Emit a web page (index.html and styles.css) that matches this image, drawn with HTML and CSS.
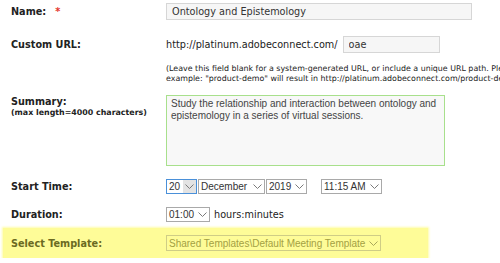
FILE: index.html
```html
<!DOCTYPE html>
<html lang="en">
<head>
    <meta charset="UTF-8">
    <title>Meeting Information</title>
    <link rel="stylesheet" href="styles.css">
</head>
<body>
    <div class="form">
        <div class="row row-name">
            <div class="label">Name:<span class="req">*</span></div>
            <input class="text name-input" type="text" value="Ontology and Epistemology">
        </div>

        <div class="row row-url">
            <div class="label">Custom URL:</div>
            <span class="url-prefix">http://platinum.adobeconnect.com/</span>
            <input class="text url-input" type="text" value="oae">
        </div>
        <div class="help">
            (Leave this field blank for a system-generated URL, or include a unique URL path. Please use only letters and numbers. For<br>
            example: "product-demo" will result in http://platinum.adobeconnect.com/product-demo/)
        </div>

        <div class="row row-summary">
            <div class="label">
                Summary:
                <div class="sub">(max length=4000 characters)</div>
            </div>
            <textarea class="summary">Study the relationship and interaction between ontology and epistemology in a series of virtual sessions.</textarea>
        </div>

        <div class="row row-start">
            <div class="label">Start Time:</div>
            <div class="select day focus"><span class="value">20</span><span class="arrow"><svg width="9" height="5" viewBox="0 0 9 5"><polyline points="0.5,0.5 4.5,4.5 8.5,0.5"/></svg></span></div>
            <div class="select month"><span class="value">December</span><span class="arrow"><svg width="9" height="5" viewBox="0 0 9 5"><polyline points="0.5,0.5 4.5,4.5 8.5,0.5"/></svg></span></div>
            <div class="select year"><span class="value">2019</span><span class="arrow"><svg width="9" height="5" viewBox="0 0 9 5"><polyline points="0.5,0.5 4.5,4.5 8.5,0.5"/></svg></span></div>
            <div class="select time"><span class="value">11:15 AM</span><span class="arrow"><svg width="9" height="5" viewBox="0 0 9 5"><polyline points="0.5,0.5 4.5,4.5 8.5,0.5"/></svg></span></div>
        </div>

        <div class="row row-duration">
            <div class="label">Duration:</div>
            <div class="select duration"><span class="value">01:00</span><span class="arrow"><svg width="9" height="5" viewBox="0 0 9 5"><polyline points="0.5,0.5 4.5,4.5 8.5,0.5"/></svg></span></div>
            <span class="units">hours:minutes</span>
        </div>

        <div class="row row-template highlight">
            <div class="label">Select Template:</div>
            <div class="select template"><span class="value">Shared Templates\Default Meeting Template</span><span class="arrow"><svg width="9" height="5" viewBox="0 0 9 5"><polyline points="0.5,0.5 4.5,4.5 8.5,0.5"/></svg></span></div>
        </div>
    </div>
</body>
</html>
```

FILE: styles.css
```css
html, body {
    overflow: hidden;
}
body {
    margin: 0;
    background: #fff;
    color: #222;
    font-family: "DejaVu Sans", Verdana, sans-serif;
    font-size: 9.7px;
}
.form {
    padding: 3px 0 0 11px;
}
.row {
    display: flex;
    align-items: center;
}
.label {
    width: 155px;
    flex: none;
    font-weight: bold;
}
.req {
    color: #e3342b;
    margin-left: 9px;
}

/* text inputs */
.text {
    box-sizing: border-box;
    height: 17px;
    margin: 0;
    padding: 0 5px;
    border: 1px solid #d6d6d6;
    background: #f6f6f6;
    color: #333;
    font-family: "DejaVu Sans", Verdana, sans-serif;
    font-size: 9.7px;
    outline: none;
}
.name-input {
    width: 306px;
}
.row-url {
    margin-top: 16px;
}
.url-prefix {
    margin-right: 5px;
}
.url-input {
    width: 97px;
}
.help {
    margin: 11px 0 0 155px;
    font-size: 7.9px;
    line-height: 10px;
    white-space: nowrap;
}

/* summary */
.row-summary {
    align-items: flex-start;
    margin-top: 11px;
}
.row-summary .label {
    padding-top: 1px;
    line-height: 12px;
}
.sub {
    font-size: 7.9px;
    line-height: 10px;
}
.summary {
    box-sizing: border-box;
    width: 279px;
    height: 71px;
    margin: 0;
    padding: 2px 4px;
    border: 1px solid #a8e08c;
    background: #f8f8f8;
    color: #444;
    font-family: "Liberation Sans", Arial, sans-serif;
    font-size: 10px;
    line-height: 12px;
    resize: none;
    outline: none;
}

/* selects */
.select {
    box-sizing: border-box;
    display: flex;
    align-items: center;
    height: 15px;
    border: 1px solid #a9a9a9;
    background: #fff;
    color: #333;
    font-family: "Liberation Sans", Arial, sans-serif;
    font-size: 10px;
    margin-right: 1px;
}
.select .value {
    padding-left: 2px;
    white-space: nowrap;
}
.select .arrow {
    display: flex;
    align-items: center;
    justify-content: center;
    align-self: stretch;
    width: 13px;
    margin-left: auto;
}
.select svg {
    fill: none;
    stroke: #7a7a7a;
    stroke-width: 1;
}
.select.focus {
    border-color: #4a90d9;
}
.select.focus .arrow {
    background: #e3e3e3;
}
.row-start {
    margin-top: 13px;
}
.day {
    width: 31px;
}
.month {
    width: 67px;
}
.year {
    width: 41px;
    margin-right: 14px;
}
.time {
    width: 61px;
}
.row-duration {
    margin-top: 13px;
}
.duration {
    width: 44px;
}
.units {
    margin-left: 3px;
}

/* highlighted template row */
.highlight {
    margin: 6px 0 0 -8px;
    padding-left: 8px;
    width: 417px;
    height: 30px;
    background: #fefc98;
    box-shadow: 0 0 2px 1px #fefcaa;
}
.highlight .label {
    color: #6b6a22;
}
.template {
    width: 215px;
    height: 16px;
    border-color: #cfcd86;
    background: transparent;
    color: #a3a043;
}
.template svg {
    stroke: #a9a75a;
}
```
